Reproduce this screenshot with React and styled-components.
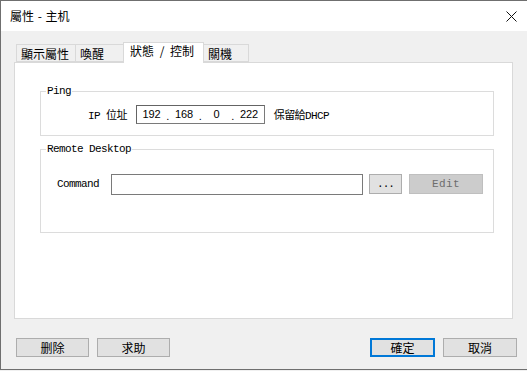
import React from 'react'
import styled, { createGlobalStyle } from 'styled-components'

const GlobalStyle = createGlobalStyle`
html, body {
margin: 0;
padding: 0;
background: #f0f0f0;
overflow: hidden;
}
`

const tabs = [
    { label: '顯示屬性', width: 60 },
    { label: '喚醒', width: 50 },
    { label: '狀態 / 控制', width: 81, active: true },
    { label: '關機', width: 46 },
]

function IpField({ parts }) {
    return (
        <IpBox>
            {parts.map((p, i) => (
                <React.Fragment key={i}>
                    {i > 0 && <IpDot>.</IpDot>}
                    <Octet>{p}</Octet>
                </React.Fragment>
            ))}
        </IpBox>
    )
}

export default function App() {
    return (
        <Window>
            <GlobalStyle />
            <TitleBar>
                <Title>屬性 - 主机</Title>
                <CloseButton>
                    <svg width="11" height="11" viewBox="0 0 11 11">
                        <path d="M0.5 0.5 L10.5 10.5 M10.5 0.5 L0.5 10.5" stroke="#111" strokeWidth="1" fill="none" />
                    </svg>
                </CloseButton>
            </TitleBar>

            <Body>
                <TabRow>
                    {tabs.map(t => (
                        <Tab key={t.label} $active={t.active} $width={t.width}>
                            {t.label}
                        </Tab>
                    ))}
                </TabRow>

                <Panel>
                    <Group $height={45}>
                        <Legend>Ping</Legend>
                        <PingRow>
                            <MonoLabel>IP 位址</MonoLabel>
                            <IpField parts={['192', '168', '0', '222']} />
                            <MonoLabel>保留給DHCP</MonoLabel>
                        </PingRow>
                    </Group>

                    <Group $height={84} $gap={13}>
                        <Legend>Remote Desktop</Legend>
                        <CommandRow>
                            <CommandLabel>Command</CommandLabel>
                            <TextInput />
                            <SmallButton $width={33} $gap={6}>...</SmallButton>
                            <SmallButton $width={74} $gap={7} $disabled>Edit</SmallButton>
                        </CommandRow>
                    </Group>
                </Panel>

                <ButtonBar>
                    <ButtonGroup>
                        <DialogButton $width={73}>删除</DialogButton>
                        <DialogButton $width={73}>求助</DialogButton>
                    </ButtonGroup>
                    <ButtonGroup>
                        <DialogButton $width={65} $primary>確定</DialogButton>
                        <DialogButton $width={74}>取消</DialogButton>
                    </ButtonGroup>
                </ButtonBar>
            </Body>
        </Window>
    )
}

const Window = styled.div`
width: 540px;
height: 370px;
box-sizing: border-box;
border: 1px solid #6f6f6f;
display: flex;
flex-direction: column;
font-family: "Noto Sans CJK TC", "Noto Sans", sans-serif;
font-size: 12px;
color: #000;
`

const TitleBar = styled.div`
height: 30px;
background: #ffffff;
display: flex;
align-items: center;
justify-content: space-between;
padding-left: 9px;
padding-right: 13px;
`

const Title = styled.div`
font-size: 12px;
line-height: 16px;
padding-bottom: 1px;
word-spacing: 1px;
`

const CloseButton = styled.div`
width: 30px;
height: 30px;
display: flex;
align-items: center;
justify-content: center;
`

const Body = styled.div`
flex: 1;
background: #f0f0f0;
padding: 11px 0 0 13px;
display: flex;
flex-direction: column;
`

const TabRow = styled.div`
display: flex;
align-items: flex-end;
height: 20px;
padding-left: 2px;
`

const Tab = styled.div`
box-sizing: border-box;
width: ${p => p.$width}px;
height: ${p => (p.$active ? 21 : 18)}px;
margin-bottom: ${p => (p.$active ? -1 : 0)}px;
margin-left: ${p => (p.$active ? -2 : -1)}px;
&:first-child { margin-left: 0; }
border: 1px solid #d9d9d9;
border-bottom: ${p => (p.$active ? 'none' : '1px solid #d9d9d9')};
background: ${p => (p.$active ? '#ffffff' : '#f0f0f0')};
position: relative;
z-index: ${p => (p.$active ? 1 : 0)};
padding-left: ${p => (p.$active ? 6 : 4)}px;
line-height: ${p => (p.$active ? 16 : 17)}px;
white-space: nowrap;
word-spacing: 3px;
font-size: 12px;
`

const Panel = styled.div`
box-sizing: border-box;
width: 499px;
height: 257px;
background: #ffffff;
border: 1px solid #d9d9d9;
padding: 28px 0 0 25px;
`

const Group = styled.div`
position: relative;
box-sizing: border-box;
width: 454px;
height: ${p => p.$height}px;
margin-top: ${p => p.$gap || 0}px;
border: 1px solid #dcdcdc;
`

const Legend = styled.span`
position: absolute;
top: -8px;
left: 5px;
padding: 0 1px;
background: #ffffff;
font-family: "Liberation Mono", "Noto Sans CJK TC", monospace;
font-size: 11px;
letter-spacing: -0.6px;
line-height: 14px;
`

const MonoLabel = styled.span`
font-family: "Liberation Mono", "Noto Sans CJK TC", monospace;
font-size: 11px;
letter-spacing: -0.6px;
white-space: nowrap;
`

const CommandLabel = styled(MonoLabel)`
line-height: 21px;
margin-right: 12px;
`

const PingRow = styled.div`
height: 100%;
display: flex;
align-items: center;
gap: 9px;
padding-left: 47px;
`

const IpBox = styled.div`
box-sizing: border-box;
width: 129px;
height: 19px;
border: 1px solid #7a7a7a;
border-top-color: #646464;
border-left-color: #646464;
display: flex;
align-items: center;
font-family: "Liberation Sans", "Noto Sans", sans-serif;
font-size: 11px;
margin-top: 1px;
`

const Octet = styled.span`
flex: 1;
text-align: center;
`

const IpDot = styled.span`
width: 3px;
text-align: center;
margin-top: 3px;
`

const CommandRow = styled.div`
display: flex;
align-items: flex-start;
padding: 24px 0 0 16px;
`

const TextInput = styled.div`
box-sizing: border-box;
width: 252px;
height: 21px;
border: 1px solid #7a7a7a;
background: #ffffff;
`

const SmallButton = styled.div`
box-sizing: border-box;
width: ${p => p.$width}px;
height: 20px;
margin-left: ${p => p.$gap}px;
border: 1px solid ${p => (p.$disabled ? '#bfbfbf' : '#adadad')};
background: ${p => (p.$disabled ? '#cccccc' : '#e1e1e1')};
color: ${p => (p.$disabled ? '#6d6d6d' : '#000000')};
display: flex;
align-items: center;
justify-content: center;
font-family: "Liberation Mono", monospace;
font-size: 11px;
letter-spacing: ${p => (p.$disabled ? '0.4px' : '-1px')};
`

const ButtonBar = styled.div`
display: flex;
justify-content: space-between;
width: 501px;
padding-left: 2px;
margin-top: 19px;
`

const ButtonGroup = styled.div`
display: flex;
gap: 8px;
`

const DialogButton = styled.div`
box-sizing: border-box;
width: ${p => p.$width}px;
height: 19px;
border: ${p => (p.$primary ? '2px solid #0078d7' : '1px solid #adadad')};
background: #e1e1e1;
display: flex;
align-items: center;
justify-content: center;
font-size: 12px;
`
